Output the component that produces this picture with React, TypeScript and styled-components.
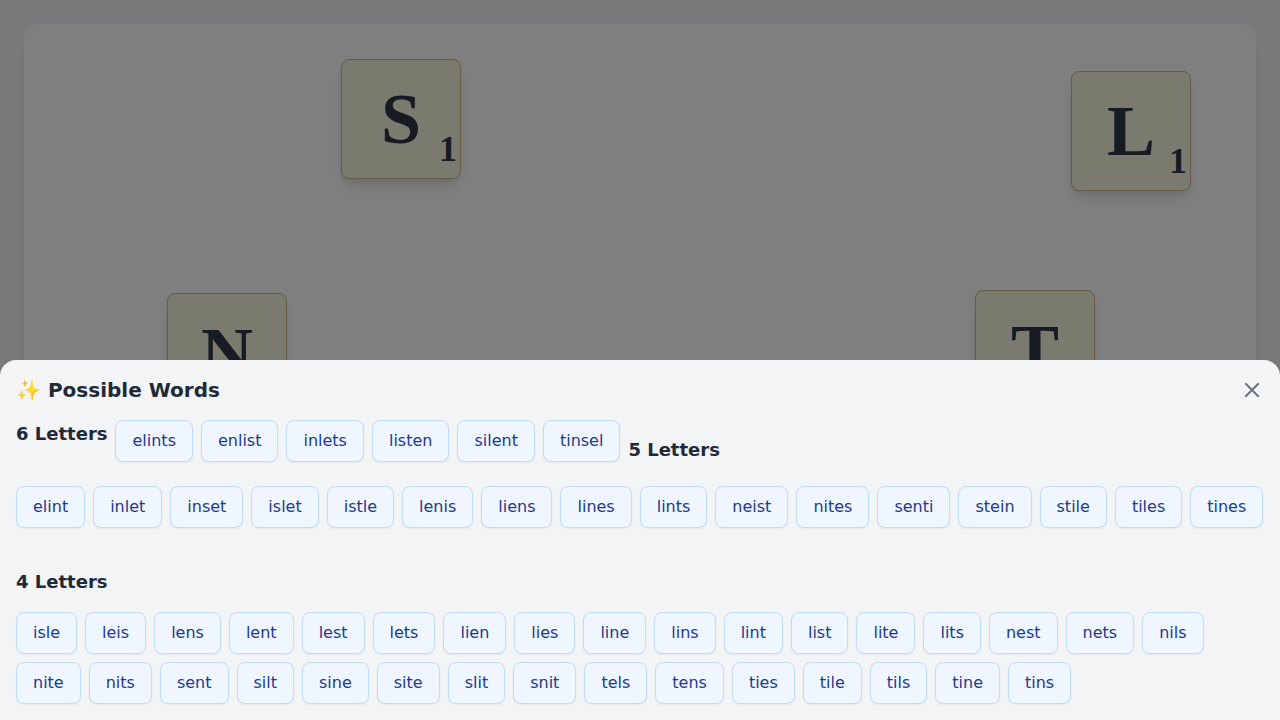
import React from "react";
import styled, { createGlobalStyle } from "styled-components";

const GlobalStyle = createGlobalStyle`
  *, *::before, *::after { box-sizing: border-box; }
  html { overflow: hidden; }
  body {
    margin: 0;
    background: #f3f4f6;
    color: #1f2937;
    font-family: "DejaVu Sans", sans-serif;
    font-size: 16px;
    line-height: 24px;
  }
  h2, h3, ul { margin: 0; padding: 0; }
`;

const Page = styled.main`
  display: flex;
  height: 100vh;
  padding: 24px;
`;

const Board = styled.section`
  position: relative;
  flex: 1;
  background: #ffffff;
  border-radius: 16px;
  box-shadow: 0 20px 25px -5px rgba(0, 0, 0, 0.1), 0 8px 10px -6px rgba(0, 0, 0, 0.1);
`;

const Tile = styled.div<{ $x: number; $y: number }>`
  position: absolute;
  left: ${(p) => p.$x}px;
  top: ${(p) => p.$y}px;
  display: flex;
  align-items: center;
  justify-content: center;
  width: 120px;
  height: 120px;
  background: #f5f5dc;
  border: 1px solid #d2b48c;
  border-radius: 8px;
  box-shadow: 0 10px 15px -3px rgba(0, 0, 0, 0.1), 0 4px 6px -2px rgba(0, 0, 0, 0.1);
  color: #2d3748;
  font-family: "Liberation Serif", serif;
  font-size: 72px;
  font-weight: 700;
  line-height: 108px;
  user-select: none;
`;

const Points = styled.span`
  position: absolute;
  right: 3px;
  bottom: 2px;
  font-size: 36px;
  line-height: 54px;
`;

const Backdrop = styled.div`
  position: fixed;
  inset: 0;
  background: rgba(0, 0, 0, 0.5);
`;

const Sheet = styled.section`
  position: fixed;
  inset: auto 0 0;
  height: 50vh;
  padding: 16px;
  overflow-y: auto;
  scrollbar-width: none;
  background: #f3f4f6;
  border-radius: 16px 16px 0 0;
`;

const SheetHeader = styled.header`
  display: flex;
  align-items: center;
  justify-content: space-between;
  margin-bottom: 16px;
`;

const Title = styled.h2`
  font-size: 20px;
  font-weight: 700;
  line-height: 28px;
`;

const CloseButton = styled.button`
  display: flex;
  padding: 0;
  border: 0;
  background: none;
  color: #6b7280;
  cursor: pointer;
`;

const Results = styled.div`
  display: flex;
  flex-wrap: wrap;
  align-items: flex-start;
  gap: 8px;
`;

const GroupTitle = styled.h3`
  margin: 16px 0 8px;
  font-size: 18px;
  font-weight: 700;
  line-height: 28px;

  &:first-child { margin-top: 0; }
`;

const WordList = styled.ul`
  display: flex;
  flex-wrap: wrap;
  gap: 8px;
  margin-bottom: 16px;
  list-style: none;
`;

const Word = styled.button`
  display: block;
  padding: 8px 16px;
  background: #eff6ff;
  border: 1px solid #bfdbfe;
  border-radius: 8px;
  box-shadow: 0 1px 2px rgba(0, 0, 0, 0.05);
  color: #1e3a8a;
  font: inherit;
  cursor: pointer;
`;

const tiles = [
  { letter: "S", points: 1, x: 317, y: 35 },
  { letter: "L", points: 1, x: 1047, y: 47 },
  { letter: "N", points: 1, x: 143, y: 269 },
  { letter: "T", points: 1, x: 951, y: 266 },
];

const groups = [
  { size: 6, words: "elints enlist inlets listen silent tinsel".split(" ") },
  {
    size: 5,
    words:
      "elint inlet inset islet istle lenis liens lines lints neist nites senti stein stile tiles tines".split(" "),
  },
  {
    size: 4,
    words:
      "isle leis lens lent lest lets lien lies line lins lint list lite lits nest nets nils nite nits sent silt sine site slit snit tels tens ties tile tils tine tins".split(" "),
  },
];

export default function App() {
  return (
    <>
      <GlobalStyle />
      <Page>
        <Board>
          {tiles.map((t) => (
            <Tile key={t.letter} $x={t.x} $y={t.y}>
              {t.letter}
              <Points>{t.points}</Points>
            </Tile>
          ))}
        </Board>
      </Page>
      <Backdrop />
      <Sheet role="dialog" aria-labelledby="words-title">
        <SheetHeader>
          <Title id="words-title">✨ Possible Words</Title>
          <CloseButton type="button" aria-label="Close">
            <svg width="24" height="24" viewBox="0 0 24 24" fill="none" stroke="currentColor" strokeWidth="2" strokeLinecap="square">
              <path d="M6 18L18 6M6 6l12 12" />
            </svg>
          </CloseButton>
        </SheetHeader>
        <Results>
          {groups.map((g) => (
            <React.Fragment key={g.size}>
              <GroupTitle>{g.size} Letters</GroupTitle>
              <WordList>
                {g.words.map((w) => (
                  <li key={w}>
                    <Word type="button">{w}</Word>
                  </li>
                ))}
              </WordList>
            </React.Fragment>
          ))}
        </Results>
      </Sheet>
    </>
  );
}
